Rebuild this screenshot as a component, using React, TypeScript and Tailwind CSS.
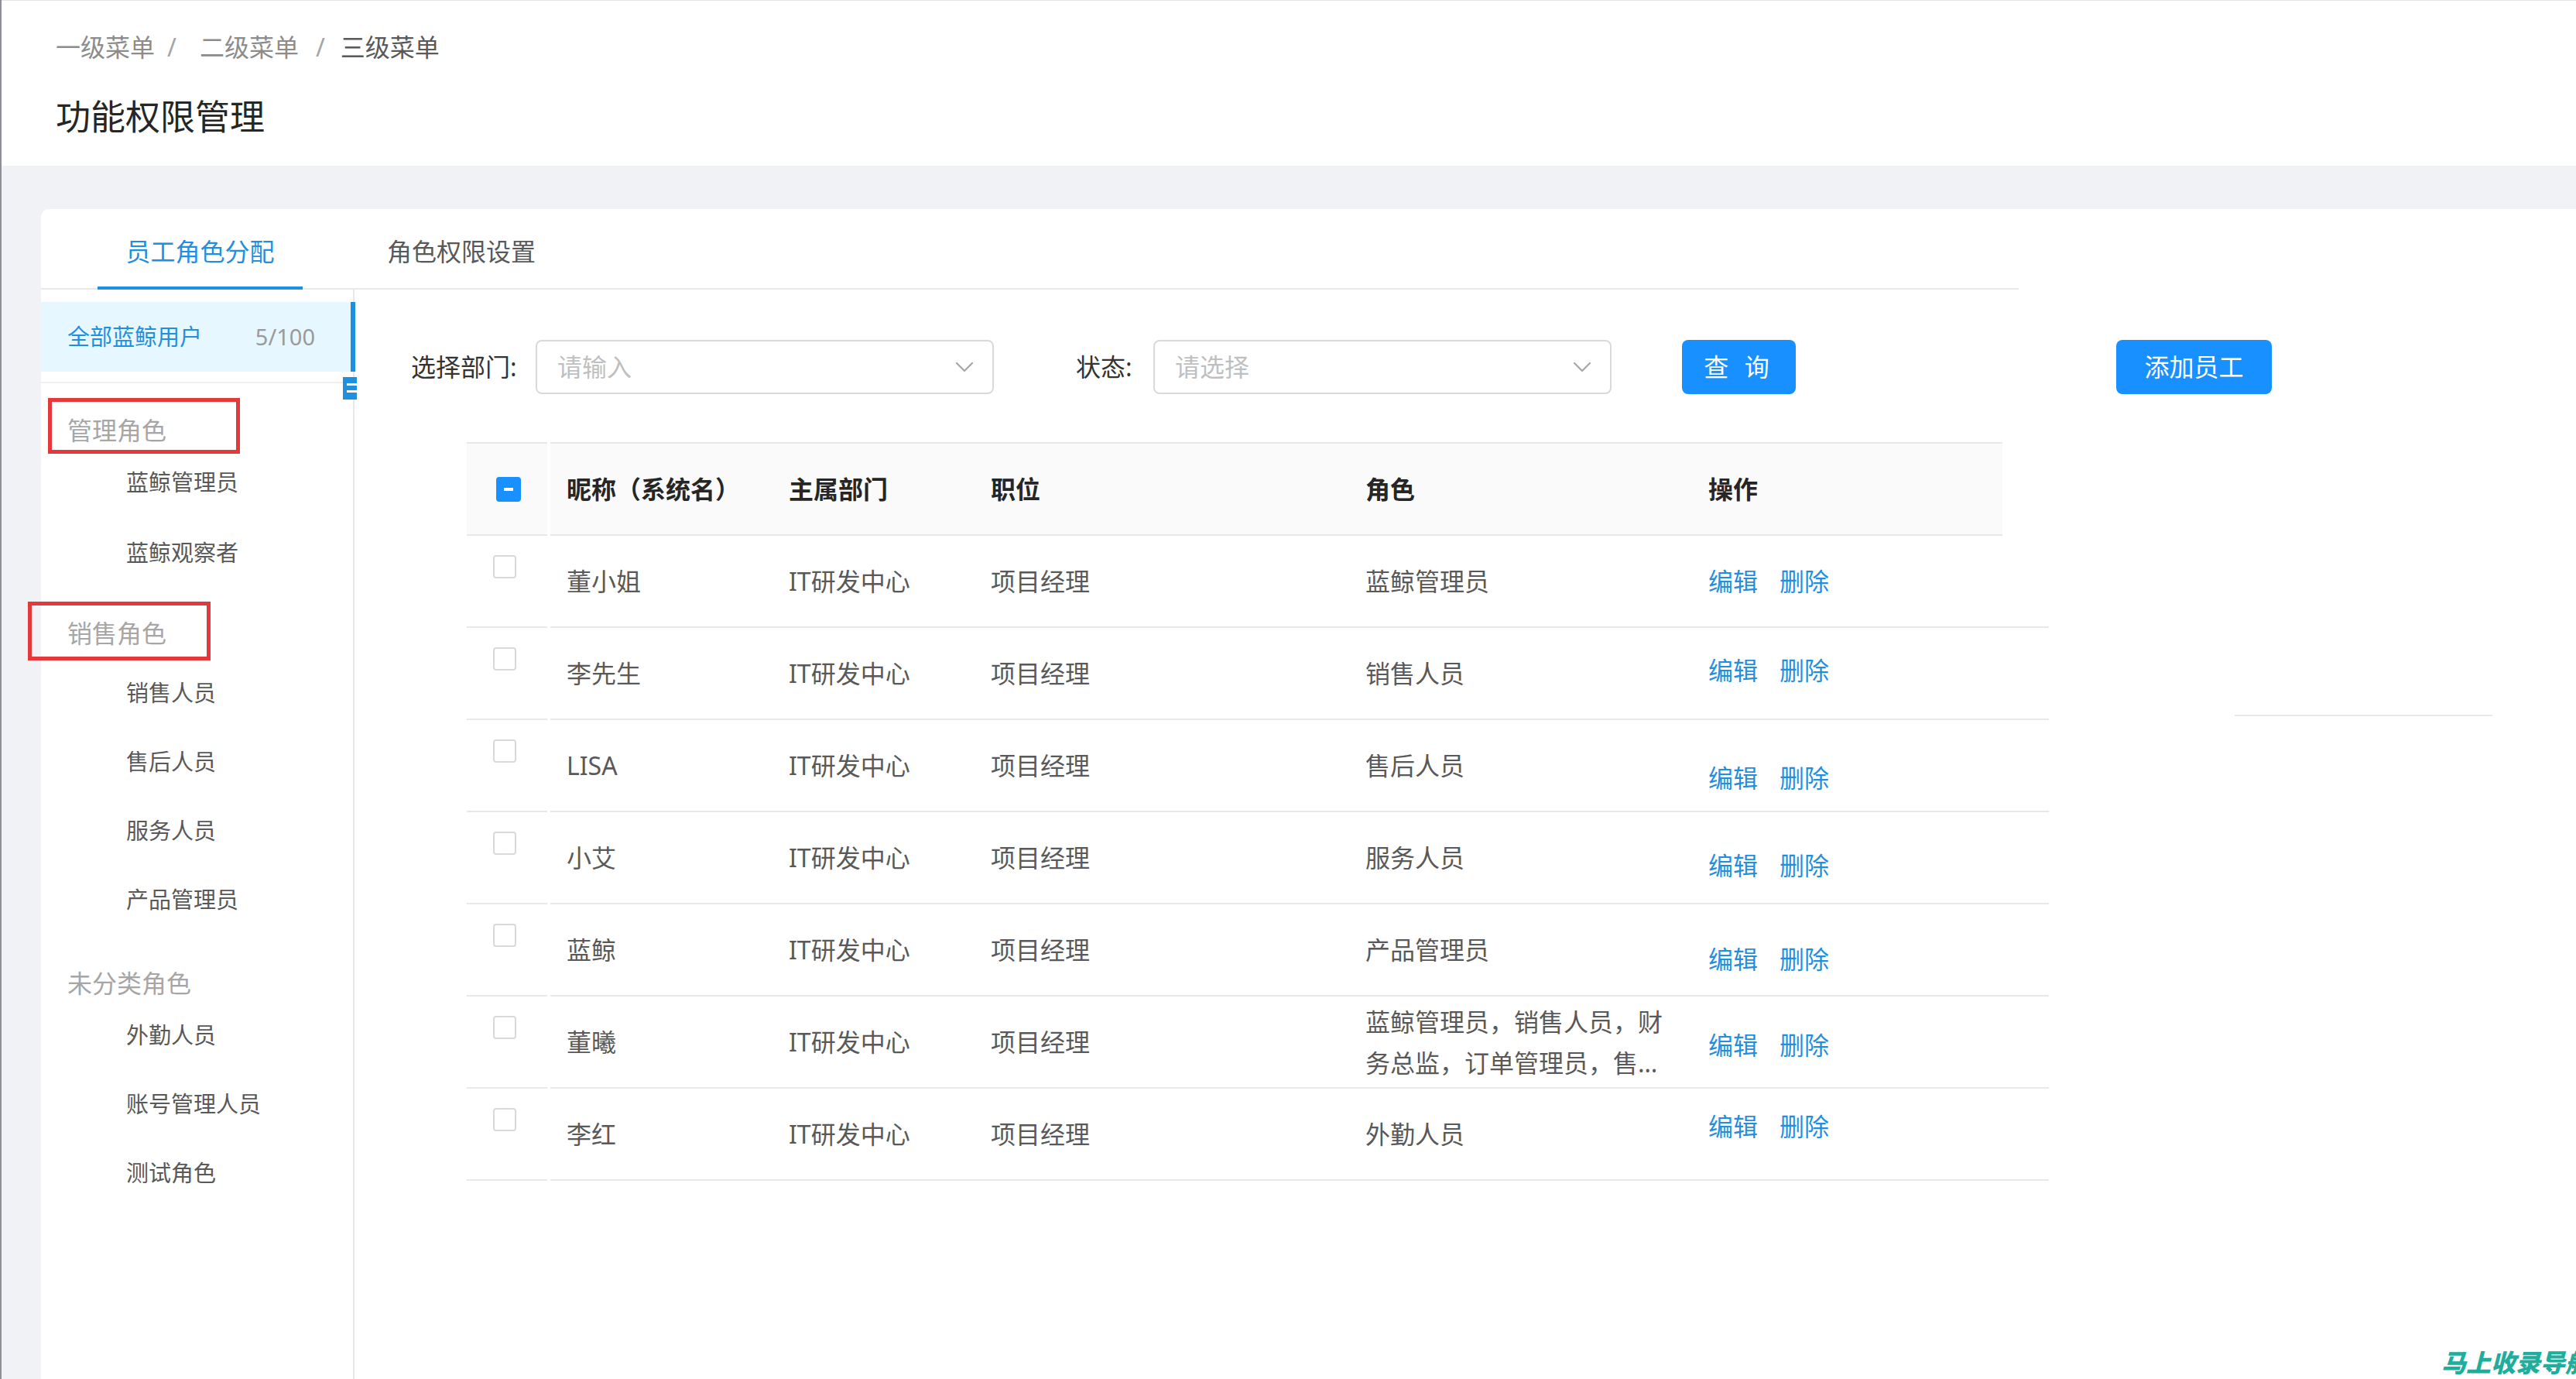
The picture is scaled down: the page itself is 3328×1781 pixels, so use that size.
import { ChevronDown } from 'lucide-react';

interface StaffRow {
  name: string;
  dept: string;
  title: string;
  role: string;
  opsPad: string;
}

const staffRows: StaffRow[] = [
  { name: '董小姐', dept: 'IT研发中心', title: '项目经理', role: '蓝鲸管理员', opsPad: 'pt-0' },
  { name: '李先生', dept: 'IT研发中心', title: '项目经理', role: '销售人员', opsPad: 'pb-[8px]' },
  { name: 'LISA', dept: 'IT研发中心', title: '项目经理', role: '售后人员', opsPad: 'pt-[32px]' },
  { name: '小艾', dept: 'IT研发中心', title: '项目经理', role: '服务人员', opsPad: 'pt-[20px]' },
  { name: '蓝鲸', dept: 'IT研发中心', title: '项目经理', role: '产品管理员', opsPad: 'pt-[24px]' },
  {
    name: '董曦',
    dept: 'IT研发中心',
    title: '项目经理',
    role: '蓝鲸管理员，销售人员，财务总监，订单管理员，售后人员',
    opsPad: 'pt-[8px]',
  },
  { name: '李红', dept: 'IT研发中心', title: '项目经理', role: '外勤人员', opsPad: 'pb-[20px]' },
];

const MenuItem: React.FC<{ label: string; extra?: string }> = ({ label, extra = '' }) => (
  <div className={`h-[89px] flex items-center pl-[110px] text-[29px] text-[#595959] ${extra}`}>{label}</div>
);

const GroupTitle: React.FC<{ label: string; extra?: string }> = ({ label, extra = '' }) => (
  <div className={`h-[44px] flex items-center pl-[34px] text-[32px] text-[#a6a6a6] ${extra}`}>{label}</div>
);

const SelectBox: React.FC<{ placeholder: string }> = ({ placeholder }) => (
  <div className="w-[592px] h-[70px] border-2 border-[#d9d9d9] rounded-[8px] bg-white flex items-center justify-between pl-[26px] pr-[16px]">
    <span className="text-[32px] text-[#bfbfbf]">{placeholder}</span>
    <ChevronDown size={40} strokeWidth={1.4} className="text-[#a8a8a8]" />
  </div>
);

const App: React.FC = () => {
  return (
    <div className="relative w-[3328px] h-[1781px] overflow-hidden bg-[#f0f2f5] border-l-2 border-[#8e9097] font-['Noto_Sans','Noto_Sans_CJK_SC',sans-serif]">
      {/* page header */}
      <div className="h-[214px] bg-white border-t border-[#e4e4e4] pl-[70px]">
        <div className="pt-[38px] flex items-center text-[32px] leading-[44px]">
          <span className="text-[#8c8c8c]">一级菜单</span>
          <span className="text-[#a6a6a6] ml-[16px] mr-[30px]">/</span>
          <span className="text-[#8c8c8c]">二级菜单</span>
          <span className="text-[#a6a6a6] ml-[22px] mr-[20px]">/</span>
          <span className="text-[#595959]">三级菜单</span>
        </div>
        <h1 className="mt-[38px] text-[45px] leading-[60px] text-[#262626]">功能权限管理</h1>
      </div>

      {/* card */}
      <div className="ml-[51px] mt-[56px] h-[1511px] bg-white rounded-tl-[10px] flex flex-col">
        <div className="w-[2555px] h-[104px] border-b-2 border-[#e8e8e8] flex shrink-0">
          <div className="relative ml-[73px] w-[265px] flex justify-center pt-[33px]">
            <span className="text-[32px] leading-[44px] text-[#1f8fe0]">员工角色分配</span>
            <div className="absolute left-0 right-0 -bottom-[2px] h-[4px] bg-[#1f8fe0]" />
          </div>
          <div className="ml-[72px] px-[37px] pt-[33px]">
            <span className="text-[32px] leading-[44px] text-[#595959]">角色权限设置</span>
          </div>
        </div>

        <div className="flex flex-1">
          {/* role menu */}
          <div className="relative w-[405px] border-r-2 border-[#e8e8e8] pt-[16px] shrink-0">
            <div className="relative h-[90px] bg-[#e6f7ff] flex items-center justify-between pl-[34px] pr-[49px] text-[29px]">
              <span className="text-[#1f8fe0]">全部蓝鲸用户</span>
              <span className="text-[#9a9a9a]">5/100</span>
              <div className="absolute top-0 -right-[3px] w-[6px] h-full bg-[#1f8fe0]" />
            </div>
            <div className="mt-[13px] w-[400px] h-[2px] bg-[#f0f0f0]" />

            <GroupTitle label="管理角色" extra="mt-[39px]" />
            <MenuItem label="蓝鲸管理员" />
            <MenuItem label="蓝鲸观察者" extra="mt-[2px]" />
            <GroupTitle label="销售角色" extra="mt-[38px]" />
            <MenuItem label="销售人员" extra="mt-[10px]" />
            <MenuItem label="售后人员" />
            <MenuItem label="服务人员" />
            <MenuItem label="产品管理员" />
            <GroupTitle label="未分类角色" extra="mt-[42px]" />
            <MenuItem label="外勤人员" />
            <MenuItem label="账号管理人员" />
            <MenuItem label="测试角色" />

            {/* collapse handle */}
            <svg className="absolute left-[390px] top-[113px]" width="18" height="29" viewBox="0 0 18 29">
              <rect width="18" height="29" fill="#1f8fe0" />
              <rect x="5" y="8" width="13" height="3" fill="#fff" />
              <rect x="5" y="17" width="13" height="3" fill="#fff" />
            </svg>

            {/* red annotation boxes */}
            <div className="absolute left-[9px] top-[140px] w-[248px] h-[72px] border-[5px] border-[#e5383b]" />
            <div className="absolute -left-[17px] top-[403px] w-[236px] h-[76px] border-[5px] border-[#e5383b]" />
          </div>

          {/* main */}
          <div className="flex-1 flex flex-col">
            <div className="mt-[65px] h-[70px] pl-[73px] flex items-center">
              <span className="w-[161px] text-[32px] text-[#333]">选择部门:</span>
              <SelectBox placeholder="请输入" />
              <span className="ml-[106px] w-[100px] text-[32px] text-[#333]">状态:</span>
              <SelectBox placeholder="请选择" />
              <button className="ml-[91px] w-[147px] h-[70px] rounded-[8px] bg-[#1890ff] text-white text-[32px] tracking-[6px]">
                查 询
              </button>
              <button className="ml-[414px] w-[201px] h-[70px] rounded-[8px] bg-[#1890ff] text-white text-[32px]">
                添加员工
              </button>
            </div>

            <div className="mt-[62px] pl-[145px] flex items-start">
              <div className="w-[2044px] text-[32px]">
                {/* table head */}
                <div className="w-[1984px] h-[121px] flex">
                  <div className="w-[104px] bg-[#fafafa] border-y-2 border-[#e8e8e8] flex items-center pl-[38px]">
                    <div className="w-[32px] h-[32px] rounded-[4px] bg-[#1890ff] flex items-center justify-center">
                      <div className="w-[12px] h-[4px] bg-white" />
                    </div>
                  </div>
                  <div className="w-[4px]" />
                  <div className="flex-1 bg-[#fafafa] border-y-2 border-[#e8e8e8] flex items-center pl-[21px] font-bold text-[#262626]">
                    <div className="w-[287px]">昵称（系统名）</div>
                    <div className="w-[261px]">主属部门</div>
                    <div className="w-[484px]">职位</div>
                    <div className="w-[443px]">角色</div>
                    <div className="flex-1">操作</div>
                  </div>
                </div>

                {/* table body */}
                {staffRows.map((row, index) => (
                  <div key={index} className="h-[119px] flex">
                    <div className="w-[104px] border-b-2 border-[#e8e8e8] pl-[34px] pt-[25px]">
                      <div className="w-[30px] h-[30px] rounded-[4px] border-2 border-[#d9d9d9] bg-white" />
                    </div>
                    <div className="w-[4px]" />
                    <div className="flex-1 border-b-2 border-[#e8e8e8] flex items-center pl-[21px] text-[#595959]">
                      <div className="w-[287px]">{row.name}</div>
                      <div className="w-[261px]">{row.dept}</div>
                      <div className="w-[484px]">{row.title}</div>
                      <div className="w-[443px]">
                        <p className="w-[392px] leading-[53px] line-clamp-2">{row.role}</p>
                      </div>
                      <div className={`flex-1 self-stretch flex items-center gap-[28px] text-[#1f8fe0] ${row.opsPad}`}>
                        <span>编辑</span>
                        <span>删除</span>
                      </div>
                    </div>
                  </div>
                ))}
              </div>
              <div className="ml-[240px] mt-[352px] w-[333px] h-[2px] bg-[#e8e8e8]" />
            </div>
          </div>
        </div>
      </div>

      {/* watermark */}
      <div className="absolute -right-[18px] bottom-[5px] text-[32px] leading-none font-black italic text-[#1fae9b]">
        马上收录导航
      </div>
    </div>
  );
};

export default App;
